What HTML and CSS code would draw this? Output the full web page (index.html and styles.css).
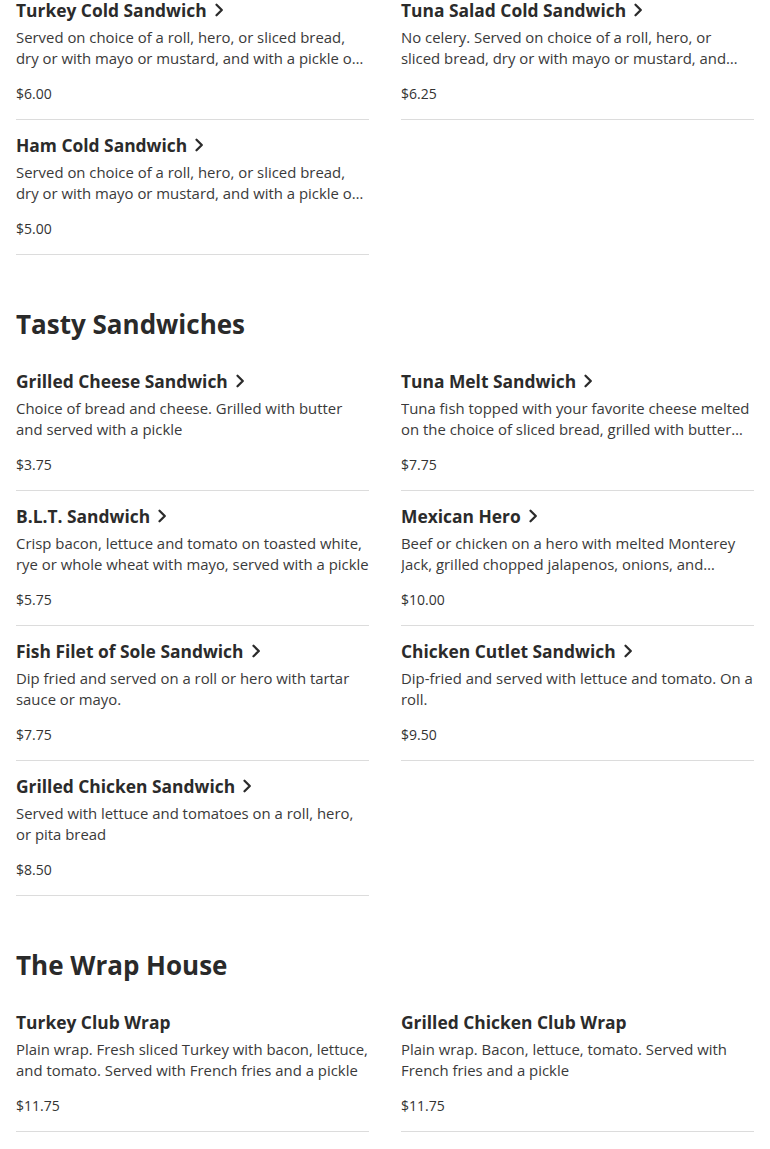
FILE: index.html
```html
<!DOCTYPE html>
<html>
<head>
<meta charset="utf-8">
<link rel="stylesheet" href="styles.css">
</head>
<body>
<main class="menu">
  <section class="section first">
    <div class="grid">
      <article class="item">
        <h3 class="title">Turkey Cold Sandwich <svg class="chev" viewBox="0 0 10 14"><path d="M2.5 1.8 L7.8 7 L2.5 12.2"/></svg></h3>
        <p class="desc">Served on choice of a roll, hero, or sliced bread, dry or with mayo or mustard, and with a pickle on the side</p>
        <p class="price">$6.00</p>
      </article>
      <article class="item">
        <h3 class="title">Tuna Salad Cold Sandwich <svg class="chev" viewBox="0 0 10 14"><path d="M2.5 1.8 L7.8 7 L2.5 12.2"/></svg></h3>
        <p class="desc">No celery. Served on choice of a roll, hero, or sliced bread, dry or with mayo or mustard, and with a pickle on the side</p>
        <p class="price">$6.25</p>
      </article>
      <article class="item">
        <h3 class="title">Ham Cold Sandwich <svg class="chev" viewBox="0 0 10 14"><path d="M2.5 1.8 L7.8 7 L2.5 12.2"/></svg></h3>
        <p class="desc">Served on choice of a roll, hero, or sliced bread, dry or with mayo or mustard, and with a pickle on the side</p>
        <p class="price">$5.00</p>
      </article>
    </div>
  </section>

  <section class="section">
    <h2 class="heading">Tasty Sandwiches</h2>
    <div class="grid">
      <article class="item">
        <h3 class="title">Grilled Cheese Sandwich <svg class="chev" viewBox="0 0 10 14"><path d="M2.5 1.8 L7.8 7 L2.5 12.2"/></svg></h3>
        <p class="desc">Choice of bread and cheese. Grilled with butter and served with a pickle</p>
        <p class="price">$3.75</p>
      </article>
      <article class="item">
        <h3 class="title">Tuna Melt Sandwich <svg class="chev" viewBox="0 0 10 14"><path d="M2.5 1.8 L7.8 7 L2.5 12.2"/></svg></h3>
        <p class="desc">Tuna fish topped with your favorite cheese melted on the choice of sliced bread, grilled with butter and served with a pickle</p>
        <p class="price">$7.75</p>
      </article>
      <article class="item">
        <h3 class="title">B.L.T. Sandwich <svg class="chev" viewBox="0 0 10 14"><path d="M2.5 1.8 L7.8 7 L2.5 12.2"/></svg></h3>
        <p class="desc">Crisp bacon, lettuce and tomato on toasted white, rye or whole wheat with mayo, served with a pickle</p>
        <p class="price">$5.75</p>
      </article>
      <article class="item">
        <h3 class="title">Mexican Hero <svg class="chev" viewBox="0 0 10 14"><path d="M2.5 1.8 L7.8 7 L2.5 12.2"/></svg></h3>
        <p class="desc">Beef or chicken on a hero with melted Monterey Jack, grilled chopped jalapenos, onions, and peppers</p>
        <p class="price">$10.00</p>
      </article>
      <article class="item">
        <h3 class="title">Fish Filet of Sole Sandwich <svg class="chev" viewBox="0 0 10 14"><path d="M2.5 1.8 L7.8 7 L2.5 12.2"/></svg></h3>
        <p class="desc">Dip fried and served on a roll or hero with tartar sauce or mayo.</p>
        <p class="price">$7.75</p>
      </article>
      <article class="item">
        <h3 class="title">Chicken Cutlet Sandwich <svg class="chev" viewBox="0 0 10 14"><path d="M2.5 1.8 L7.8 7 L2.5 12.2"/></svg></h3>
        <p class="desc">Dip-fried and served with lettuce and tomato. On a roll.</p>
        <p class="price">$9.50</p>
      </article>
      <article class="item">
        <h3 class="title">Grilled Chicken Sandwich <svg class="chev" viewBox="0 0 10 14"><path d="M2.5 1.8 L7.8 7 L2.5 12.2"/></svg></h3>
        <p class="desc">Served with lettuce and tomatoes on a roll, hero, or pita bread</p>
        <p class="price">$8.50</p>
      </article>
    </div>
  </section>

  <section class="section">
    <h2 class="heading">The Wrap House</h2>
    <div class="grid">
      <article class="item">
        <h3 class="title">Turkey Club Wrap</h3>
        <p class="desc">Plain wrap. Fresh sliced Turkey with bacon, lettuce, and tomato. Served with French fries and a pickle</p>
        <p class="price">$11.75</p>
      </article>
      <article class="item">
        <h3 class="title">Grilled Chicken Club Wrap</h3>
        <p class="desc">Plain wrap. Bacon, lettuce, tomato. Served with French fries and a pickle</p>
        <p class="price">$11.75</p>
      </article>
    </div>
  </section>
</main>
</body>
</html>
```

FILE: styles.css
```css
* { box-sizing: border-box; }
html, body { margin: 0; padding: 0; background: #fff; }
body {
  font-family: "Open Sans", "Noto Sans", sans-serif;
  color: #2a2a2a;
  overflow: hidden;
}
.menu {
  padding: 0 16px;
  margin-top: -15px;
}
.section { margin-top: 51px; }
.section.first { margin-top: 0; }
.heading {
  margin: 0 0 14px;
  font-size: 26px;
  line-height: 36px;
  font-weight: 700;
  color: #2a2a2a;
}
.grid {
  display: grid;
  grid-template-columns: 1fr 1fr;
  column-gap: 32px;
}
.item {
  padding: 13px 0 15px;
  border-bottom: 1px solid #dcdcdc;
}
.title {
  margin: 0;
  font-size: 17.4px;
  line-height: 24px;
  font-weight: 700;
  color: #2b2b2b;
  display: flex;
  align-items: center;
  gap: 7px;
  white-space: nowrap;
}
.chev {
  width: 10px;
  height: 14px;
  flex: none;
}
.chev path {
  fill: none;
  stroke: #2b2b2b;
  stroke-width: 2.3;
  stroke-linecap: round;
  stroke-linejoin: round;
}
.desc {
  margin: 5px 0 0;
  font-size: 14.9px;
  line-height: 21px;
  color: #3a3a3a;
  display: -webkit-box;
  -webkit-line-clamp: 2;
  -webkit-box-orient: vertical;
  overflow: hidden;
  height: 42px;
}
.price {
  margin: 14px 0 0;
  font-size: 14px;
  line-height: 21px;
  color: #333;
}
```
